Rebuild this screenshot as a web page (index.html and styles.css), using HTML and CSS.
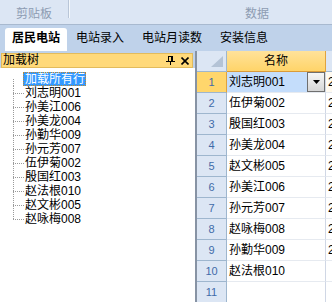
FILE: index.html
```html
<!DOCTYPE html>
<html lang="zh-CN">
<head>
    <meta charset="UTF-8">
    <title>居民电站</title>
    <link rel="stylesheet" href="styles.css">
</head>
<body>
    <div class="ribbon">
        <div class="group clip">剪贴板</div>
        <div class="sep"></div>
        <div class="group data">数据</div>
    </div>

    <div class="tabs">
        <div class="tab active">居民电站</div>
        <div class="tab">电站录入</div>
        <div class="tab">电站月读数</div>
        <div class="tab">安装信息</div>
    </div>

    <div class="main">
        <div class="tree-panel">
            <div class="panel-head">
                <span>加载树</span>
                <span class="head-icons">
                    <svg width="9" height="9" viewBox="0 0 9 9">
                        <rect x="2.5" y="0.5" width="4" height="5" fill="none" stroke="#000"/>
                        <rect x="5" y="1" width="1" height="4" fill="#000"/>
                        <rect x="0" y="5" width="9" height="1" fill="#000"/>
                        <rect x="4" y="6" width="1" height="3" fill="#000"/>
                    </svg>
                    <svg width="8" height="8" viewBox="0 0 8 8">
                        <path d="M0.5 0.5 L7.5 7.5 M7.5 0.5 L0.5 7.5" stroke="#000" stroke-width="1.6"/>
                    </svg>
                </span>
            </div>
            <ul class="tree">
                <li><span class="branch first"></span><span class="label selected">加载所有行</span></li>
                <li><span class="branch"></span><span class="label">刘志明001</span></li>
                <li><span class="branch"></span><span class="label">孙美江006</span></li>
                <li><span class="branch"></span><span class="label">孙美龙004</span></li>
                <li><span class="branch"></span><span class="label">孙勤华009</span></li>
                <li><span class="branch"></span><span class="label">孙元芳007</span></li>
                <li><span class="branch"></span><span class="label">伍伊菊002</span></li>
                <li><span class="branch"></span><span class="label">殷国红003</span></li>
                <li><span class="branch"></span><span class="label">赵法根010</span></li>
                <li><span class="branch"></span><span class="label">赵文彬005</span></li>
                <li><span class="branch last"></span><span class="label">赵咏梅008</span></li>
            </ul>
        </div>

        <div class="grid">
            <div class="grow">
                <div class="corner">
                    <svg width="12" height="11" viewBox="0 0 12 11">
                        <polygon points="12,0 12,11 0,11" fill="#b4c3d6"/>
                    </svg>
                </div>
                <div class="col-head">名称</div>
                <div class="col-head other"></div>
            </div>
            <div class="grow current">
                <div class="rownum">1</div>
                <div class="cell name">刘志明001
                    <span class="drop">
                        <svg width="7" height="4" viewBox="0 0 7 4"><polygon points="0,0 7,0 3.5,4" fill="#000"/></svg>
                    </span>
                </div>
                <div class="cell next">2</div>
            </div>
            <div class="grow"><div class="rownum">2</div><div class="cell name">伍伊菊002</div><div class="cell next">2</div></div>
            <div class="grow"><div class="rownum">3</div><div class="cell name">殷国红003</div><div class="cell next">2</div></div>
            <div class="grow"><div class="rownum">4</div><div class="cell name">孙美龙004</div><div class="cell next">2</div></div>
            <div class="grow"><div class="rownum">5</div><div class="cell name">赵文彬005</div><div class="cell next">2</div></div>
            <div class="grow"><div class="rownum">6</div><div class="cell name">孙美江006</div><div class="cell next">2</div></div>
            <div class="grow"><div class="rownum">7</div><div class="cell name">孙元芳007</div><div class="cell next">2</div></div>
            <div class="grow"><div class="rownum">8</div><div class="cell name">赵咏梅008</div><div class="cell next">2</div></div>
            <div class="grow"><div class="rownum">9</div><div class="cell name">孙勤华009</div><div class="cell next">2</div></div>
            <div class="grow"><div class="rownum">10</div><div class="cell name">赵法根010</div><div class="cell next"></div></div>
            <div class="grow"><div class="rownum">11</div><div class="cell name"></div><div class="cell next"></div></div>
        </div>
    </div>
</body>
</html>
```

FILE: styles.css
```css
* {
    box-sizing: border-box;
}
body {
    margin: 0;
    width: 332px;
    height: 302px;
    overflow: hidden;
    font-family: "Liberation Sans", "Noto Sans CJK SC", sans-serif;
    font-size: 12px;
    color: #000;
    background: #bfd2ea;
}

/* ribbon */
.ribbon {
    display: flex;
    height: 25px;
    background: #dce6f4;
    border-bottom: 1px solid #a8b9cf;
}
.group {
    padding-top: 4px;
    line-height: 20px;
    color: #8d9cb2;
    white-space: nowrap;
}
.clip {
    width: 68px;
    text-align: center;
}
.sep {
    width: 2px;
    height: 18px;
    border-left: 1px solid #b9c6d8;
    border-right: 1px solid #f4f8fc;
}
.data {
    padding-left: 175px;
}

/* tabs */
.tabs {
    display: flex;
    height: 26px;
    padding: 3px 0 0 5px;
}
.tab {
    padding: 0 9px 3px;
    line-height: 20px;
    white-space: nowrap;
}
.tab.active {
    background: #fff;
    font-weight: bold;
    padding: 0 7px 3px;
    border-radius: 3px 3px 0 0;
}

/* main area */
.main {
    display: flex;
    height: 251px;
}
.tree-panel {
    width: 197px;
    display: flex;
    flex-direction: column;
    padding-top: 2px;
    border-right: 2px solid #8793a4;
}
.panel-head {
    display: flex;
    justify-content: space-between;
    align-items: center;
    height: 15px;
    margin: 0 2px 0 1px;
    padding: 0 3px 0 1px;
    background: #ffd97a;
    border: 1px solid #e2bb5c;
    line-height: 13px;
}
.head-icons {
    display: flex;
    align-items: center;
    gap: 6px;
}
.tree {
    flex: 1;
    margin: 0;
    padding: 4px 0 0 13px;
    list-style: none;
    background: #fff;
}
.tree li {
    display: flex;
    height: 14px;
    line-height: 14px;
}
.branch {
    width: 11px;
    height: 14px;
    background:
        repeating-linear-gradient(to bottom, #9a9a9a 0 1px, transparent 1px 2px) 0 0 / 1px 14px no-repeat,
        repeating-linear-gradient(to right, #9a9a9a 0 1px, transparent 1px 2px) 0 7px / 11px 1px no-repeat;
}
.branch.first {
    background:
        repeating-linear-gradient(to bottom, #9a9a9a 0 1px, transparent 1px 2px) 0 7px / 1px 7px no-repeat;
}
.branch.last {
    background:
        repeating-linear-gradient(to bottom, #9a9a9a 0 1px, transparent 1px 2px) 0 0 / 1px 8px no-repeat,
        repeating-linear-gradient(to right, #9a9a9a 0 1px, transparent 1px 2px) 0 7px / 11px 1px no-repeat;
}
.label {
    padding: 0 1px;
    white-space: nowrap;
}
.label.selected {
    margin-left: -1px;
    padding: 0 1px 0 2px;
    background: #3399ff;
    color: #fff;
    outline: 1px dotted #c08a30;
    outline-offset: -1px;
}

/* grid */
.grid {
    flex: 1;
    background: #fff;
}
.grow {
    display: grid;
    grid-template-columns: 30px 99px 1fr;
    height: 21px;
}
.corner,
.rownum {
    background: #dce6f4;
    border-right: 1px solid #9eb6ce;
    border-bottom: 1px solid #9eb6ce;
}
.corner {
    display: flex;
    justify-content: flex-end;
    align-items: flex-end;
    padding: 0 3px 4px 0;
}
.col-head {
    text-align: center;
    line-height: 20px;
    background: linear-gradient(#ffe29a, #ffd469);
    border-right: 1px solid #e0a33e;
    border-bottom: 1px solid #d99b39;
}
.col-head.other {
    background: #dce6f4;
    border-right: none;
    border-bottom-color: #9eb6ce;
}
.rownum {
    text-align: center;
    line-height: 20px;
    font-size: 11px;
    color: #3f6ba9;
}
.current .rownum {
    background: #ffd66c;
    border-right-color: #e0a33e;
}
.cell {
    line-height: 20px;
    padding-left: 2px;
    white-space: nowrap;
    overflow: hidden;
    border-bottom: 1px solid #e6eaf0;
}
.cell.name {
    border-right: 1px solid #d0d7e5;
}
.current .name {
    display: flex;
    justify-content: space-between;
    background: #c4ddfb;
    padding-right: 0;
}
.current .next {
    background: #fffaf0;
}
.drop {
    display: flex;
    align-items: center;
    justify-content: center;
    width: 18px;
    height: 20px;
    border: 1px solid #6f6f6f;
    background: linear-gradient(#f6f6f6, #d6d6d6);
}
```
